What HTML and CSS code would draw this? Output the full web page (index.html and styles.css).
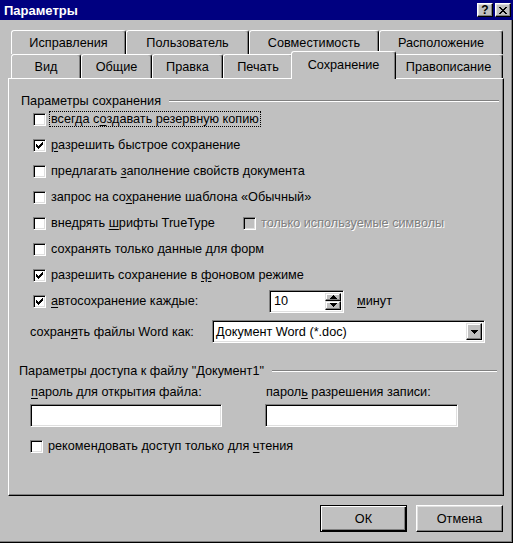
FILE: index.html
```html
<!DOCTYPE html>
<html lang="ru">
    <head>
        <meta charset="UTF-8">
        <title>Параметры</title>
        <link rel="stylesheet" href="styles.css">
    </head>
    <body>
        <div class="window">
            <div class="titlebar">
                <span class="title">Параметры</span>
                <div class="caption-buttons">
                    <span class="caption-btn">?</span>
                    <span class="caption-btn">
                        <svg width="8" height="7" viewBox="0 0 8 7" shape-rendering="crispEdges">
                            <path d="M0 0h2v1h-2zM6 0h2v1h-2zM1 1h2v1h-2zM5 1h2v1h-2zM2 2h4v1h-4zM3 3h2v1h-2zM2 4h4v1h-4zM1 5h2v1h-2zM5 5h2v1h-2zM0 6h2v1h-2zM6 6h2v1h-2z" fill="#000"/>
                        </svg>
                    </span>
                </div>
            </div>

            <div class="tabs">
                <div class="tab-row back">
                    <div class="tab">Исправления</div>
                    <div class="tab">Пользователь</div>
                    <div class="tab">Совместимость</div>
                    <div class="tab">Расположение</div>
                </div>
                <div class="tab-row front">
                    <div class="tab">Вид</div>
                    <div class="tab">Общие</div>
                    <div class="tab">Правка</div>
                    <div class="tab">Печать</div>
                    <div class="tab selected">Сохранение</div>
                    <div class="tab">Правописание</div>
                </div>
            </div>

            <div class="panel">
                <div class="group-title">
                    <span>Параметры сохранения</span>
                    <i class="etch"></i>
                </div>

                <div class="options">
                    <div class="check-row">
                        <span class="box"></span>
                        <span class="label focus">всегда с<u>о</u>здавать резервную копию</span>
                    </div>
                    <div class="check-row">
                        <span class="box checked"><svg width="11" height="11" viewBox="0 0 11 11" shape-rendering="crispEdges"><path d="M2 4h1v3h-1zM3 5h1v3h-1zM4 6h1v3h-1zM5 5h1v3h-1zM6 4h1v3h-1zM7 3h1v3h-1zM8 2h1v3h-1z"/></svg></span>
                        <span class="label"><u>р</u>азрешить быстрое сохранение</span>
                    </div>
                    <div class="check-row">
                        <span class="box"></span>
                        <span class="label">предлагать <u>з</u>аполнение свойств документа</span>
                    </div>
                    <div class="check-row">
                        <span class="box"></span>
                        <span class="label">запрос на со<u>х</u>ранение шаблона «Обычный»</span>
                    </div>
                    <div class="check-row">
                        <span class="box"></span>
                        <span class="label fixed-fonts">внедрять <u>ш</u>рифты TrueType</span>
                        <span class="box disabled"></span>
                        <span class="label muted">только используемые символы</span>
                    </div>
                    <div class="check-row">
                        <span class="box"></span>
                        <span class="label">сохранять только <u>д</u>анные для форм</span>
                    </div>
                    <div class="check-row">
                        <span class="box checked"><svg width="11" height="11" viewBox="0 0 11 11" shape-rendering="crispEdges"><path d="M2 4h1v3h-1zM3 5h1v3h-1zM4 6h1v3h-1zM5 5h1v3h-1zM6 4h1v3h-1zM7 3h1v3h-1zM8 2h1v3h-1z"/></svg></span>
                        <span class="label">разрешить сохранение в <u>ф</u>оновом режиме</span>
                    </div>
                    <div class="check-row">
                        <span class="box checked"><svg width="11" height="11" viewBox="0 0 11 11" shape-rendering="crispEdges"><path d="M2 4h1v3h-1zM3 5h1v3h-1zM4 6h1v3h-1zM5 5h1v3h-1zM6 4h1v3h-1zM7 3h1v3h-1zM8 2h1v3h-1z"/></svg></span>
                        <span class="label autosave"><u>а</u>втосохранение каждые:</span>
                        <div class="spinner sunken">
                            <span class="spin-value">10</span>
                            <div class="spin-buttons">
                                <span class="spin-btn"><svg width="7" height="4" viewBox="0 0 7 4" shape-rendering="crispEdges"><path d="M3 0h1v1h1v1h1v1h1v1h-7v-1h1v-1h1v-1h1z"/></svg></span>
                                <span class="spin-btn"><svg width="7" height="4" viewBox="0 0 7 4" shape-rendering="crispEdges"><path d="M0 0h7v1h-1v1h-1v1h-1v1h-1v-1h-1v-1h-1v-1h-1z"/></svg></span>
                            </div>
                        </div>
                        <span class="minutes"><u>м</u>инут</span>
                    </div>
                </div>

                <div class="save-as">
                    <span class="save-label">сохран<u>я</u>ть файлы Word как:</span>
                    <div class="combo sunken">
                        <span class="combo-value">Документ Word (*.doc)</span>
                        <span class="combo-btn"><svg width="7" height="4" viewBox="0 0 7 4" shape-rendering="crispEdges"><path d="M0 0h7v1h-1v1h-1v1h-1v1h-1v-1h-1v-1h-1v-1h-1z"/></svg></span>
                    </div>
                </div>

                <div class="group-title second">
                    <span>Параметры доступа к файлу "Документ1"</span>
                    <i class="etch"></i>
                </div>

                <div class="passwords">
                    <div class="pw-col">
                        <span class="pw-label"><u>п</u>ароль для открытия файла:</span>
                        <div class="field sunken"></div>
                    </div>
                    <div class="pw-col">
                        <span class="pw-label">парол<u>ь</u> разрешения записи:</span>
                        <div class="field sunken"></div>
                    </div>
                </div>

                <div class="check-row readonly">
                    <span class="box"></span>
                    <span class="label">рекомендовать доступ только для <u>ч</u>тения</span>
                </div>
            </div>

            <div class="actions">
                <button class="btn default" type="button">ОК</button>
                <button class="btn" type="button">Отмена</button>
            </div>
        </div>
    </body>
</html>
```

FILE: styles.css
```css
* {
    box-sizing: border-box;
}
body {
    margin: 0;
    background: #c0c0c0;
    font-family: "Liberation Sans", Arial, sans-serif;
    font-size: 12.7px;
    color: #000;
}
u {
    text-underline-offset: 2px;
}
.window {
    width: 513px;
    height: 543px;
    background: #c0c0c0;
    box-shadow: inset -1px -1px #000, inset -2px -2px #808080;
    display: flex;
    flex-direction: column;
}

/* title bar */
.titlebar {
    height: 20px;
    background: #000080;
    color: #fff;
    display: flex;
    align-items: center;
    justify-content: space-between;
    padding: 0 2px 0 4px;
}
.title {
    font-weight: bold;
    font-size: 13px;
}
.caption-buttons {
    display: flex;
    gap: 2px;
}
.caption-btn {
    width: 16px;
    height: 14px;
    background: #c0c0c0;
    border: 1px solid;
    border-color: #fff #000 #000 #fff;
    box-shadow: inset -1px -1px #808080, inset 1px 1px #dfdfdf;
    color: #000;
    font-weight: bold;
    font-size: 12px;
    line-height: 1;
    display: flex;
    align-items: center;
    justify-content: center;
}

/* tabs */
.tabs {
    margin: 10px 0 0 11px;
    width: 492px;
}
.tab-row {
    display: flex;
    height: 24px;
    align-items: flex-end;
}
.tab {
    height: 24px;
    background: #c0c0c0;
    border: 1px solid;
    border-bottom: none;
    border-color: #fff #000 transparent #fff;
    border-radius: 3px 3px 0 0;
    box-shadow: inset -1px 0 #808080;
    display: flex;
    align-items: center;
    justify-content: center;
    white-space: nowrap;
    padding-top: 1px;
}
.back .tab:nth-child(1) { width: 115px; }
.back .tab:nth-child(2) { width: 123px; }
.back .tab:nth-child(3) { width: 130px; }
.back .tab:nth-child(4) { width: 124px; }
.front .tab:nth-child(1) { width: 70px; }
.front .tab:nth-child(2) { width: 71px; }
.front .tab:nth-child(3) { width: 71px; }
.front .tab:nth-child(4) { width: 70px; }
.front .tab:nth-child(6) { width: 109px; }
.tab.selected {
    width: 105px;
    height: 28px;
    margin: 0 -2px -1px;
    padding-bottom: 3px;
    position: relative;
    z-index: 1;
}

/* panel */
.panel {
    margin-left: 8px;
    width: 496px;
    height: 418px;
    border: 1px solid;
    border-color: #fff #000 #000 #fff;
    box-shadow: inset -1px -1px #808080;
    padding: 13px 0 0 12px;
    display: flex;
    flex-direction: column;
}
.group-title {
    height: 18px;
    display: flex;
    align-items: center;
    gap: 8px;
    padding-right: 4px;
}
.group-title.second {
    margin: 19px 0 0 -2px;
    padding-right: 6px;
}
.etch {
    flex: 1;
    height: 2px;
    border-top: 1px solid #808080;
    border-bottom: 1px solid #fff;
}
.options {
    display: flex;
    flex-direction: column;
    gap: 8px;
    padding-left: 12px;
}
.check-row {
    height: 18px;
    display: flex;
    align-items: center;
}
.box {
    width: 13px;
    height: 13px;
    flex: none;
    background: #fff;
    border: 1px solid;
    border-color: #808080 #fff #fff #808080;
    box-shadow: inset 1px 1px #000, inset -1px -1px #dfdfdf;
    margin-right: 3px;
}
.box svg {
    display: block;
}
.box.disabled {
    background: #c0c0c0;
}
.label {
    padding: 0 1px;
    border: 1px dotted transparent;
    white-space: nowrap;
}
.label.focus {
    border-color: #000;
}
.label.fixed-fonts {
    width: 194px;
}
.label.autosave {
    width: 220px;
}
.label.muted {
    color: #808080;
    text-shadow: 1px 1px #fff;
}
.sunken {
    background: #fff;
    border: 1px solid;
    border-color: #808080 #fff #fff #808080;
    box-shadow: inset 1px 1px #000, inset -1px -1px #dfdfdf;
}
.spinner {
    width: 75px;
    height: 23px;
    flex: none;
    display: flex;
    align-items: center;
    justify-content: space-between;
    padding: 2px;
}
.spin-value {
    padding-left: 2px;
}
.spin-buttons {
    display: flex;
    flex-direction: column;
    height: 100%;
}
.spin-btn {
    width: 16px;
    flex: 1;
    background: #c0c0c0;
    border: 1px solid;
    border-color: #dfdfdf #000 #000 #dfdfdf;
    box-shadow: inset -1px -1px #808080, inset 1px 1px #fff;
    display: flex;
    align-items: center;
    justify-content: center;
}
.spin-btn svg,
.combo-btn svg {
    display: block;
}
.minutes {
    margin-left: 13px;
}

/* save format */
.save-as {
    margin: 10px 0 0 9px;
    height: 23px;
    display: flex;
    align-items: center;
}
.save-label {
    width: 182px;
}
.combo {
    width: 273px;
    height: 23px;
    display: flex;
    align-items: center;
    justify-content: space-between;
    padding: 2px;
}
.combo-value {
    padding-left: 1px;
}
.combo-btn {
    width: 16px;
    height: 100%;
    background: #c0c0c0;
    border: 1px solid;
    border-color: #dfdfdf #000 #000 #dfdfdf;
    box-shadow: inset -1px -1px #808080, inset 1px 1px #fff;
    display: flex;
    align-items: center;
    justify-content: center;
}

/* access */
.passwords {
    display: flex;
    gap: 43px;
    margin: 4px 0 0 9px;
}
.pw-col {
    display: flex;
    flex-direction: column;
    gap: 4px;
}
.pw-label {
    height: 16px;
    line-height: 16px;
    padding-left: 1px;
}
.pw-col:first-child .field {
    width: 192px;
}
.pw-col:last-child .field {
    width: 193px;
}
.field {
    height: 23px;
}
.check-row.readonly {
    margin: 10px 0 0 9px;
}

/* buttons */
.actions {
    display: flex;
    justify-content: flex-end;
    gap: 9px;
    margin: 9px 10px 0 0;
}
.btn {
    width: 87px;
    height: 27px;
    background: #c0c0c0;
    font: inherit;
    color: #000;
    border: 1px solid;
    border-color: #fff #000 #000 #fff;
    box-shadow: inset -1px -1px #808080, inset 1px 1px #dfdfdf;
    padding: 0;
}
.btn.default {
    border-color: #000;
    box-shadow: inset 1px 1px #fff, inset -1px -1px #000, inset -2px -2px #808080;
}
```
